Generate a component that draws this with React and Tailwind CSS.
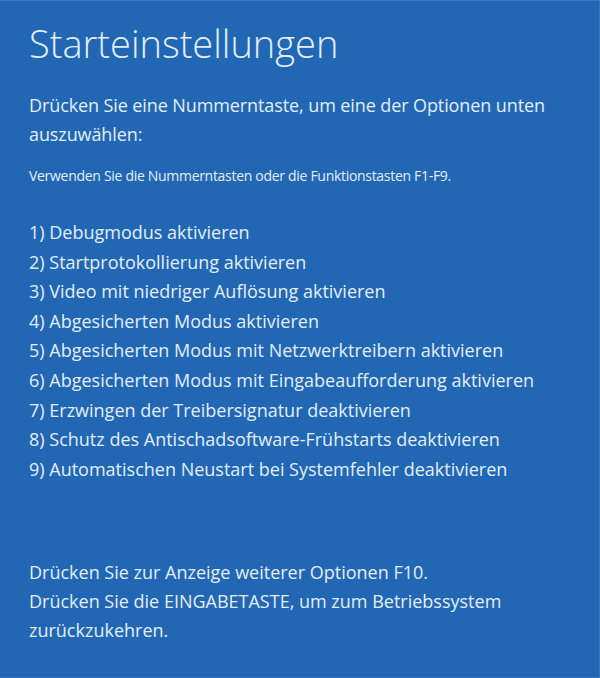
import React from 'react'

const OPTIONS = [
  '1) Debugmodus aktivieren',
  '2) Startprotokollierung aktivieren',
  '3) Video mit niedriger Auflösung aktivieren',
  '4) Abgesicherten Modus aktivieren',
  '5) Abgesicherten Modus mit Netzwerktreibern aktivieren',
  '6) Abgesicherten Modus mit Eingabeaufforderung aktivieren',
  '7) Erzwingen der Treibersignatur deaktivieren',
  '8) Schutz des Antischadsoftware-Frühstarts deaktivieren',
  '9) Automatischen Neustart bei Systemfehler deaktivieren',
]

export default function App() {
  return (
    <div className="h-[678px] w-[600px] overflow-hidden bg-[#2167b3] border-y border-r border-[#3678bf] text-[#e4eef9] font-['Open_Sans',sans-serif]">
      <div className="pl-[29px] pt-[20px]">
        {/* Titel */}
        <h1 className="text-[38px] leading-[44px] font-light">Starteinstellungen</h1>

        {/* Hinweis */}
        <p className="mt-[26px] text-[18px] leading-[29px] font-normal tracking-[-0.1px] pr-[40px]">
          Drücken Sie eine Nummerntaste, um eine der Optionen unten auszuwählen:
        </p>
        <p className="mt-[17px] text-[14px] leading-[20px] tracking-[-0.3px]">
          Verwenden Sie die Nummerntasten oder die Funktionstasten F1-F9.
        </p>

        {/* Optionen */}
        <ul className="mt-[32px] text-[18px] leading-[29.6px]">
          {OPTIONS.map(o => (
            <li key={o}>{o}</li>
          ))}
        </ul>

        {/* Fußzeile */}
        <div className="mt-[74px] text-[18px] leading-[29px] pr-[80px]">
          <p>Drücken Sie zur Anzeige weiterer Optionen F10.</p>
          <p>Drücken Sie die EINGABETASTE, um zum Betriebssystem zurückzukehren.</p>
        </div>
      </div>
    </div>
  )
}
